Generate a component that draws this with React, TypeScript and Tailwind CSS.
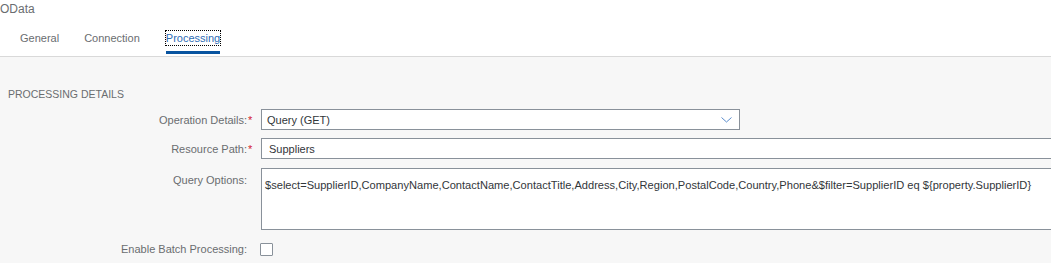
import React from "react";

function Label({ text, required }: { text: string; required?: boolean }) {
  return (
    <div className="flex w-[261px] shrink-0 justify-end items-center pr-[7px]">
      <span className="text-[11px] leading-[14px] text-[#6a6d70]">{text}</span>
      <span className="w-[6px] ml-[1px] text-[11px] leading-[11px] text-[#d32030] mt-[1px]">{required ? "*" : ""}</span>
    </div>
  );
}

export default function App() {
  return (
    <div className="w-[1051px] h-[263px] overflow-hidden bg-[#f7f7f7] font-['Liberation_Sans',Arial,sans-serif]">
      <div className="bg-white h-[57px] border-b border-[#d9d9d9]">
        <div className="text-[12px] leading-[18px] text-[#6a6d70]">OData</div>
        <div className="flex pl-[8px] pt-[13px]">
          <div className="flex flex-col px-[12px]">
            <span className="text-[11px] leading-[14px] text-[#6a6d70]">General</span>
          </div>
          <div className="flex flex-col pl-[13px] pr-[12px]">
            <span className="text-[11px] leading-[14px] text-[#6a6d70]">Connection</span>
          </div>
          <div className="flex flex-col items-start pl-[14px] pr-[12px]">
            <span className="text-[11px] leading-[14px] text-[#2f6db5] outline-1 outline-dotted outline-black outline-offset-0">Processing</span>
            <div className="mt-[6px] h-[3px] w-[54px] bg-[#0854a0]" />
          </div>
        </div>
      </div>

      <div className="pt-[31px] text-[10.5px] leading-[12px] text-[#6a6d70] pl-[8px]">PROCESSING DETAILS</div>

      <div className="mt-[9px] flex flex-col">
        <div className="flex items-center h-[21px]">
          <Label text="Operation Details:" required />
          <div className="flex items-center justify-between w-[479px] h-[21px] border border-[#89919a] bg-white pl-[5px] pr-[7px]">
            <span className="text-[11px] leading-[14px] text-[#32363a]">Query (GET)</span>
            <svg width="11" height="6" viewBox="0 0 11 6">
              <path d="M0.5 0.5 L5.5 5 L10.5 0.5" fill="none" stroke="#5a8ccc" strokeWidth="1" />
            </svg>
          </div>
        </div>

        <div className="flex items-center h-[21px] mt-[8px]">
          <Label text="Resource Path:" required />
          <div className="flex items-center w-[820px] h-[21px] border border-[#89919a] bg-white pl-[7px] shrink-0">
            <span className="text-[11px] leading-[14px] text-[#32363a]">Suppliers</span>
          </div>
        </div>

        <div className="flex items-start mt-[9px]">
          <div className="pt-[5px]">
            <Label text="Query Options:" />
          </div>
          <div className="w-[820px] h-[62px] border border-[#89919a] bg-white pl-[3px] pt-[3px] shrink-0">
            <span className="text-[11.1px] leading-[14px] text-[#32363a] whitespace-nowrap">
              $select=SupplierID,CompanyName,ContactName,ContactTitle,Address,City,Region,PostalCode,Country,Phone&amp;$filter=SupplierID eq ${"{"}property.SupplierID{"}"}
            </span>
          </div>
        </div>

        <div className="flex items-center h-[14px] mt-[12px]">
          <Label text="Enable Batch Processing:" />
          <div className="w-[13px] h-[13px] -ml-[1px] border border-[#89919a] bg-white rounded-[1px]" />
        </div>
      </div>
    </div>
  );
}
